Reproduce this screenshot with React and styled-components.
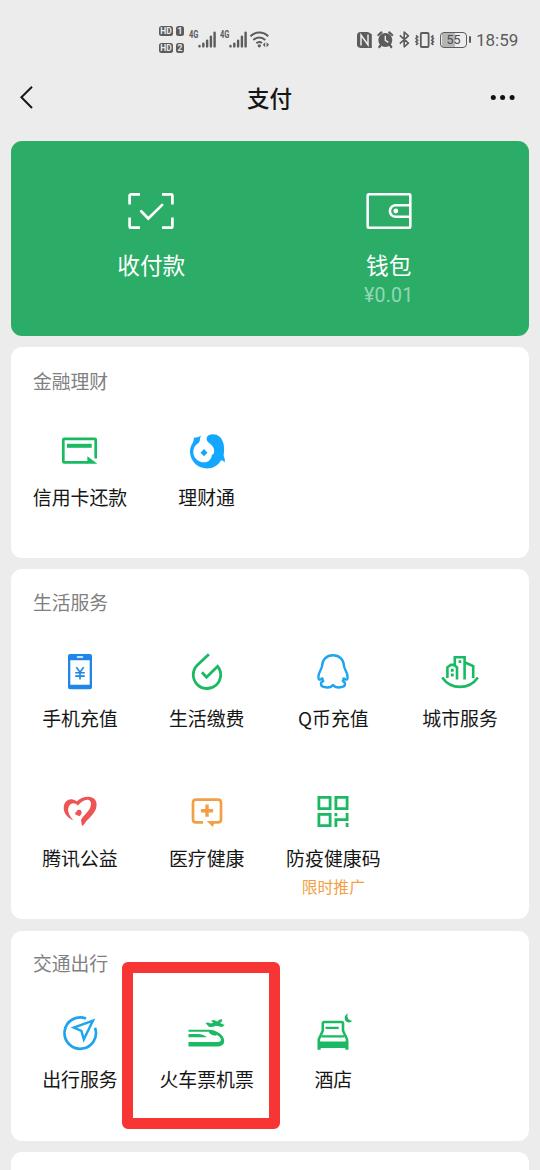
import React from "react";
import styled, { createGlobalStyle } from "styled-components";

const GREEN = "#1aba62";
const BLUE = "#1fa5f0";

const GlobalStyle = createGlobalStyle`
  * {
    box-sizing: border-box;
  }
  body {
    margin: 0;
    background: #ececec;
    font-family: "Noto Sans CJK SC", sans-serif;
  }
  svg {
    display: block;
    flex: none;
    overflow: visible;
  }
`;

// ---------- status bar ----------

const Signal = () => (
  <svg width="18" height="17" viewBox="0 0 18 17" stroke="#5c5c5c" strokeWidth="2.4" strokeLinecap="round">
    <path d="M1.5 15v.4M5.3 12.6v2.8M9.1 9.6v5.8M12.9 5.8v9.6M16.6 1.6v13.8" />
  </svg>
);

const Wifi = () => (
  <svg width="20" height="17" viewBox="0 0 20 17" fill="none" stroke="#5c5c5c" strokeWidth="2">
    <path d="M.4 5.2a12.6 12.6 0 0 1 17.8 0M3.4 9a8.2 8.2 0 0 1 11.8 0M6.4 12.2a4.4 4.4 0 0 1 5.6-.2" />
    <circle cx="9.3" cy="14.8" r="1.6" fill="#5c5c5c" stroke="none" />
    <path d="M15.2 11.3v5l-2.4-2.5zM16.6 11.3v5l2.4-2.5z" fill="#5c5c5c" stroke="none" />
  </svg>
);

const Nfc = () => (
  <svg width="15" height="16" viewBox="0 0 15 16">
    <path d="M3.5 0H11l3.8 2.2V16H3.5Q0 15.5 0 12.5v-9Q0 .3 3.5 0z" fill="#5c5c5c" />
    <path d="M4 13.5V3l7 9.8V2.5" fill="none" stroke="#ececec" strokeWidth="1.5" />
  </svg>
);

const Alarm = () => (
  <svg width="17" height="17" viewBox="0 0 17 17">
    <circle cx="8.3" cy="9" r="7" fill="#5c5c5c" />
    <path d="M1.4 4 4.4 1.4M12.2 1.4l3 2.6M3.8 14 2.3 16M12.8 14l1.5 2" stroke="#5c5c5c" strokeWidth="2.2" strokeLinecap="round" />
    <path d="M8.3 4.8v4.6l3 2" fill="none" stroke="#ececec" strokeWidth="1.4" />
  </svg>
);

const Bluetooth = () => (
  <svg width="11" height="17" viewBox="0 0 11 17" fill="none" stroke="#5c5c5c" strokeWidth="1.6" strokeLinejoin="round">
    <path d="m.8 4.4 8.6 7.8-4.2 3.6V1.1l4.2 3.7-8.6 7.8" />
  </svg>
);

const Vibrate = () => (
  <svg width="20" height="16" viewBox="0 0 20 16" fill="none" stroke="#5c5c5c" strokeWidth="1.8">
    <rect x="5.8" y="1" width="7.8" height="14" rx="1" />
    <path d="m1 3.3 1.7 1.6L1 6.5l1.7 1.7L1 9.8l1.7 1.6L1 13M18.4 3.3l-1.7 1.6 1.7 1.6-1.7 1.7 1.7 1.6-1.7 1.6 1.7 1.6" strokeWidth="1.6" />
  </svg>
);

const StatusBar = styled.div`
  height: 80px;
  display: flex;
  align-items: center;
  justify-content: space-between;
  padding: 0 22px 1px 159px;
  color: #5c5c5c;
`;

const StatusGroup = styled.div`
  display: flex;
  align-items: center;
`;

const SimGrid = styled.div`
  display: grid;
  grid-template-columns: 14px 8px;
  gap: 7px 3px;
  margin-right: 5px;
`;

const SimBadge = styled.span`
  height: 10px;
  border-radius: 2.5px;
  background: #5c5c5c;
  color: #ececec;
  font: 700 8.5px/10.5px Roboto, sans-serif;
  text-align: center;
`;

const NetType = styled.span`
  width: 9px;
  margin-bottom: 9px;
  font: 700 10px/10px Roboto, sans-serif;
  transform: scaleX(0.75);
  transform-origin: left;
`;

const SignalSlot = styled.div`
  margin-right: ${(p) => p.$gap}px;
`;

const RightGroup = styled(StatusGroup)`
  gap: 5px;
`;

const Battery = styled.div`
  position: relative;
  width: 27px;
  height: 16px;
  margin-right: 4px;
  border: 1.6px solid #5c5c5c;
  border-radius: 4px;
  background: linear-gradient(to right, #ececec 1px, #b5b5b5 1px 14px, #ececec 14px);
  font: 400 12.5px/14.5px Roboto, sans-serif;
  color: #4a4a4a;
  text-align: center;

  &::after {
    content: "";
    position: absolute;
    right: -5px;
    top: 3px;
    width: 2px;
    height: 7px;
    border-radius: 1px;
    background: #5c5c5c;
  }
`;

const Time = styled.span`
  width: 42px;
  font: 400 17px/20px Roboto, sans-serif;
  white-space: nowrap;
`;

// ---------- header ----------

const Header = styled.header`
  height: 36px;
  margin-bottom: 24.5px;
  padding: 0 24px 0 19px;
  display: grid;
  grid-template-columns: 30px 1fr 25px;
  align-items: center;
`;

const Title = styled.h1`
  margin: -3px 0 0 -1px;
  font-size: 22.5px;
  font-weight: 500;
  line-height: 36px;
  text-align: center;
  color: #161616;
`;

// ---------- cards ----------

const Main = styled.main`
  display: flex;
  flex-direction: column;
  gap: 11.3px;
  padding: 0 11px;
`;

const PayCard = styled.section`
  height: 195.7px;
  border-radius: 11px;
  background: #2bad67;
  display: grid;
  grid-template-columns: 237.5px 237.5px;
  justify-content: center;
  padding-top: 50.5px;
`;

const PayItem = styled.div`
  display: flex;
  flex-direction: column;
  align-items: center;
  color: #fff;
`;

const PayLabel = styled.div`
  margin-top: 18px;
  font-size: 22.7px;
  line-height: 32px;
`;

const Amount = styled.div`
  margin-top: 2px;
  font: 400 19.5px/26px Roboto, sans-serif;
  letter-spacing: 0.2px;
  color: rgba(255, 255, 255, 0.5);
`;

const Card = styled.section`
  height: ${(p) => p.$height}px;
  border-radius: 11px;
  background: #fff;
  padding-top: ${(p) => p.$pad || 20}px;
`;

const CardTitle = styled.h2`
  margin: 0 0 37px 22px;
  font-size: 18.8px;
  font-weight: 400;
  line-height: 26px;
  color: #808080;
`;

const Grid = styled.div`
  display: grid;
  grid-template-columns: repeat(4, 126.7px);
  grid-auto-rows: 140.3px;
  justify-content: center;
`;

const Item = styled.div`
  position: relative;
  display: flex;
  flex-direction: column;
  align-items: center;
`;

const Label = styled.div`
  margin-top: 13px;
  font-size: 18.9px;
  line-height: 26px;
  color: #161616;
  white-space: nowrap;
`;

const Promo = styled.div`
  margin-top: 6px;
  font-size: 15.8px;
  line-height: 20px;
  color: #f2a043;
`;

const Highlight = styled.div`
  position: absolute;
  left: -21.4px;
  top: -51px;
  width: 158.5px;
  height: 167px;
  border: 11px solid #f83535;
  border-radius: 6px;
`;

// ---------- icons ----------

const Icon = ({ children, color = GREEN, width = 2.7 }) => (
  <svg width="40" height="40" viewBox="0 0 40 40" fill="none" stroke={color} strokeWidth={width}>
    {children}
  </svg>
);

const ScanIcon = () => (
  <svg width="48" height="40" viewBox="0 0 48 40" fill="none" stroke="#fff" strokeWidth="2.7">
    <path d="M2.6 13.5V4.8Q2.6 3.3 4.1 3.3H13M35 3.3h8.9q1.5 0 1.5 1.5v8.7M45.4 26.5v8.7q0 1.5-1.5 1.5H35M13 36.7H4.1q-1.5 0-1.5-1.5v-8.7" />
    <path d="m14.2 20.3 7.1 7.2L35.2 13.9" strokeLinecap="round" />
  </svg>
);

const WalletIcon = () => (
  <svg width="48" height="40" viewBox="0 0 48 40" fill="none" stroke="#fff" strokeWidth="2.6">
    <rect x="2.7" y="3.3" width="42.6" height="33.4" rx="1" />
    <path d="M45 14.2H30.7a5.8 5.8 0 0 0 0 11.6H45" />
    <circle cx="30.8" cy="20" r="2.4" fill="#fff" stroke="none" />
  </svg>
);

const CreditIcon = () => (
  <Icon>
    <path d="M28 31.4H4.2q-.9 0-.9-.9V8.8q0-.9.9-.9h30.6q.9 0 .9.9V27.5" />
    <path d="M7 14.8h24.7" strokeWidth="4" />
    <path d="M27.4 25.2 37.3 32.7H27.4z" fill={GREEN} stroke="none" />
  </Icon>
);

const WealthIcon = () => (
  <Icon color="none">
    <path
      fill="#14a7ff"
      d="M14.3 4.6C12 6 9.4 6.8 6.8 6.8Q7 9.4 5.9 11.6C3.5 15 2.5 19 3.2 23C4.3 31 11.2 37.4 19.8 37.4C26.3 37.4 31.3 34.3 34 29.2Q36 29.2 37.8 31.4Q38.4 28.3 36.6 24.8C38.4 14 35.8 6.4 29.4 3.8C26 2.6 21.2 2.9 19.8 6.2C19 9 20.4 10.8 22.8 12.4C26 14.8 27.8 18.2 27 21.8Q26.9 23.2 24.9 24C24.2 28.6 21.5 31.3 17.3 31.3C11.1 31.4 6.3 26.6 6.3 20.9C6.3 17 8.2 13.7 11.2 12.2C13.8 10.5 12.2 7.2 14.3 4.6z"
    />
    <path fill="#14a7ff" d="m17 18.1 3.5 3.6-3.5 3.6-3.5-3.6z" />
  </Icon>
);

const PhoneIcon = () => (
  <Icon color="#1f86e8">
    <path
      fill="#1f86e8"
      stroke="none"
      fillRule="evenodd"
      d="M10 2h20q2 0 2 2v31.3q0 2-2 2H10q-2 0-2-2V4q0-2 2-2zM10.3 8.3v24.4h19.4V8.3z"
    />
    <path d="M17.5 4.9h5" stroke="#fff" strokeWidth="1.5" strokeLinecap="round" />
    <path d="m16.3 15.2 3.7 5 3.7-5M15.2 20.7h9.6M15.2 24.1h9.6M20 20v7.5" strokeWidth="1.6" />
  </Icon>
);

const BillsIcon = () => (
  <Icon width={2.8}>
    <path d="M21.9 2.2 10.2 13.2A13.7 13.7 0 1 0 30.7 14.3L19.5 25.3l-4.6-5" />
  </Icon>
);

const QCoinIcon = () => (
  <Icon color={BLUE} width={2.4}>
    <path
      strokeLinejoin="round"
      d="M20 3.3C13.2 3.3 9.3 8 9 14C8.8 17 5.5 20 5.4 25C5.4 27.4 6.2 28 7.6 27.4L9.4 26.4Q9.6 28 10.2 29.2C7.2 30.2 7.2 34 10.6 34.9C15 36 18.4 35.1 20 33C21.6 35.1 25 36 29.4 34.9C32.8 34 32.8 30.2 29.8 29.2Q30.4 28 30.6 26.4L32.4 27.4C33.8 28 34.6 27.4 34.6 25C34.5 20 31.2 17 31 14C30.7 8 26.8 3.3 20 3.3z"
    />
  </Icon>
);

const CityIcon = () => (
  <Icon width={2.6}>
    <path d="M2.2 25.4C11 38 29 38 37.9 25.4" />
    <path d="M7.4 26V15.3L10.8 12.9H13.8L17 15.3V27.5M14.8 13V5.3h9.8V27.5M24.6 10.2l8.6 3.8v12" />
    <path d="M10.8 16.8h2.9v2.9h-2.9zM10.8 21.5h2.9v2.9h-2.9zM18.6 8.2h2.7v2.7h-2.7z" fill={GREEN} stroke="none" />
  </Icon>
);

const HeartIcon = () => (
  <Icon color="none">
    <path
      fill="#ed5555"
      d="M17.8 10.2C13.4 5.6 7.4 6.5 4.7 11.2C1.8 17.2 5.2 25.4 13.6 28.4C9.2 23.9 6.8 18.8 8.8 14.8C10.4 11 14.2 10 17.8 13.6z"
    />
    <path
      fill="#ed5555"
      d="M16.6 9.6C20.4 5.8 26 4 30.6 5.1C35.9 6.4 37.9 11.4 35.8 17.2C33.4 23 27.4 27 24.6 31.8L22 34.2L21 28C22.6 24 27 21.2 29.4 17.2C31.8 13 31.7 8.4 28 7.7C24.4 7.3 20.6 9.8 18 13.8z"
    />
    <circle cx="19" cy="20.4" r="2.6" fill="#ed5555" />
    <path d="M15 20.6 18 20l2.6 2.9-1.1 1.4-4-1.7z" fill="#ed5555" />
  </Icon>
);

const MedicalIcon = () => (
  <Icon color="#f2a043">
    <path d="M16 30.4H9q-3 0-3-3V10.6q0-3 3-3h22q3 0 3 3v16.8q0 3-3 3h-5.5" />
    <path d="M20 12.6v12.2M13.9 18.7h12.2" strokeWidth="3.4" />
    <path d="M19.8 29.1h8.2l-2.2 5.8z" fill="#f2a043" stroke="none" />
  </Icon>
);

const CodeIcon = () => (
  <Icon width={2.8}>
    <path d="M5.9 5.4h11.2v11.2H5.9zM22.9 5.4h11.2v11.2H22.9zM5.9 22.4h11.2v11.2H5.9z" />
    <path d="M22.9 21v3.2M22.9 35v-7.3h11.2V21M34.1 30.9V35" />
  </Icon>
);

const TravelIcon = () => (
  <Icon color={BLUE}>
    <path d="M26 5.5A15.7 15.7 0 1 0 35 14.8" />
    <path d="M33 7.6 13.8 14.6 21.4 17.8 23.8 26.3z" strokeWidth="2.4" />
  </Icon>
);

const TrainIcon = () => (
  <Icon color="none">
    <path
      fill={GREEN}
      d="M1.5 16.8H22C30 17 37.2 22.4 37.2 28C37.2 31.8 34 33.5 30 33.5H1.5V29H29C32.6 29 34.3 28.1 34 26.4C33.5 24.5 31.7 22.9 29.6 21.8C29.5 23.6 25.3 22.5 22.5 20.2L21.7 18.7H1.5z"
    />
    <path fill={GREEN} d="M1.5 21H11Q16.5 21.2 20 24.3H1.5z" />
    <path
      fill={GREEN}
      d="M18.5 10 21 9.4 23.8 10.4 26.4 9.7 24 7.8 26.8 7 30.5 8.6C32.2 6.7 34.2 5.8 35.2 6.7C35.5 8 34 9.3 32.9 10.1L37.7 12 35.2 13.9 29 12.7Q24 14.9 21.7 13.4z"
    />
  </Icon>
);

const HotelIcon = () => (
  <Icon width={2.6}>
    <path d="M5.8 29V26.2L9.8 17.8V10.6Q9.8 9 11.4 9H28.5Q30 9 30 10.6V17.8L34 26.2V29" />
    <path d="M12.5 14.9h13.2M8.5 23.4h22.8" strokeWidth="2.2" />
    <path d="M4.5 28.4h31v8.4h-3.2v-1.9H7.7v1.9H4.5z" fill={GREEN} stroke="none" />
    <path d="M34.9.3C30.3 2.5 30.6 9.6 36 9.4C37.6 9.3 38.5 8.6 39 7.7C35.2 7.8 33.4 3.8 34.9.3z" fill={GREEN} stroke="none" />
  </Icon>
);

// ---------- data ----------

const sections = [
  {
    title: "金融理财",
    height: 210.3,
    pad: 20.8,
    items: [
      { label: "信用卡还款", icon: CreditIcon },
      { label: "理财通", icon: WealthIcon },
    ],
  },
  {
    title: "生活服务",
    height: 350.3,
    pad: 20,
    items: [
      { label: "手机充值", icon: PhoneIcon },
      { label: "生活缴费", icon: BillsIcon },
      { label: "Q币充值", icon: QCoinIcon },
      { label: "城市服务", icon: CityIcon },
      { label: "腾讯公益", icon: HeartIcon },
      { label: "医疗健康", icon: MedicalIcon },
      { label: "防疫健康码", icon: CodeIcon, promo: "限时推广" },
    ],
  },
  {
    title: "交通出行",
    height: 210.3,
    pad: 19.4,
    items: [
      { label: "出行服务", icon: TravelIcon },
      { label: "火车票机票", icon: TrainIcon, highlight: true },
      { label: "酒店", icon: HotelIcon },
    ],
  },
];

const Page = styled.div`
  width: 540px;
  height: 1170px;
  overflow: hidden;
  background: #ececec;
`;

const App = () => {
  return (
    <Page>
      <GlobalStyle />
      <StatusBar>
        <StatusGroup>
          <SimGrid>
            <SimBadge>HD</SimBadge>
            <SimBadge>1</SimBadge>
            <SimBadge>HD</SimBadge>
            <SimBadge>2</SimBadge>
          </SimGrid>
          <NetType>4G</NetType>
          <SignalSlot $gap={4}>
            <Signal />
          </SignalSlot>
          <NetType>4G</NetType>
          <SignalSlot $gap={3}>
            <Signal />
          </SignalSlot>
          <Wifi />
        </StatusGroup>
        <RightGroup>
          <Nfc />
          <Alarm />
          <Bluetooth />
          <Vibrate />
          <Battery>55</Battery>
          <Time>18:59</Time>
        </RightGroup>
      </StatusBar>
      <Header>
        <svg width="14" height="24" viewBox="0 0 14 24" fill="none" stroke="#161616" strokeWidth="2">
          <path d="M13 .7 2.4 11.2 13 22" />
        </svg>
        <Title>支付</Title>
        <svg width="25" height="6" viewBox="0 0 25 6" fill="#111">
          <circle cx="2.3" cy="2.5" r="2.5" />
          <circle cx="11.6" cy="2.5" r="2.5" />
          <circle cx="21.1" cy="2.5" r="2.5" />
        </svg>
      </Header>
      <Main>
        <PayCard>
          <PayItem>
            <ScanIcon />
            <PayLabel>收付款</PayLabel>
          </PayItem>
          <PayItem>
            <WalletIcon />
            <PayLabel>钱包</PayLabel>
            <Amount>¥0.01</Amount>
          </PayItem>
        </PayCard>
        {sections.map((section) => (
          <Card key={section.title} $height={section.height} $pad={section.pad}>
            <CardTitle>{section.title}</CardTitle>
            <Grid>
              {section.items.map(({ label, icon: ItemIcon, promo, highlight }) => (
                <Item key={label}>
                  <ItemIcon />
                  <Label>{label}</Label>
                  {promo && <Promo>{promo}</Promo>}
                  {highlight && <Highlight />}
                </Item>
              ))}
            </Grid>
          </Card>
        ))}
        <Card $height={210.3} />
      </Main>
    </Page>
  );
};

export default App;
